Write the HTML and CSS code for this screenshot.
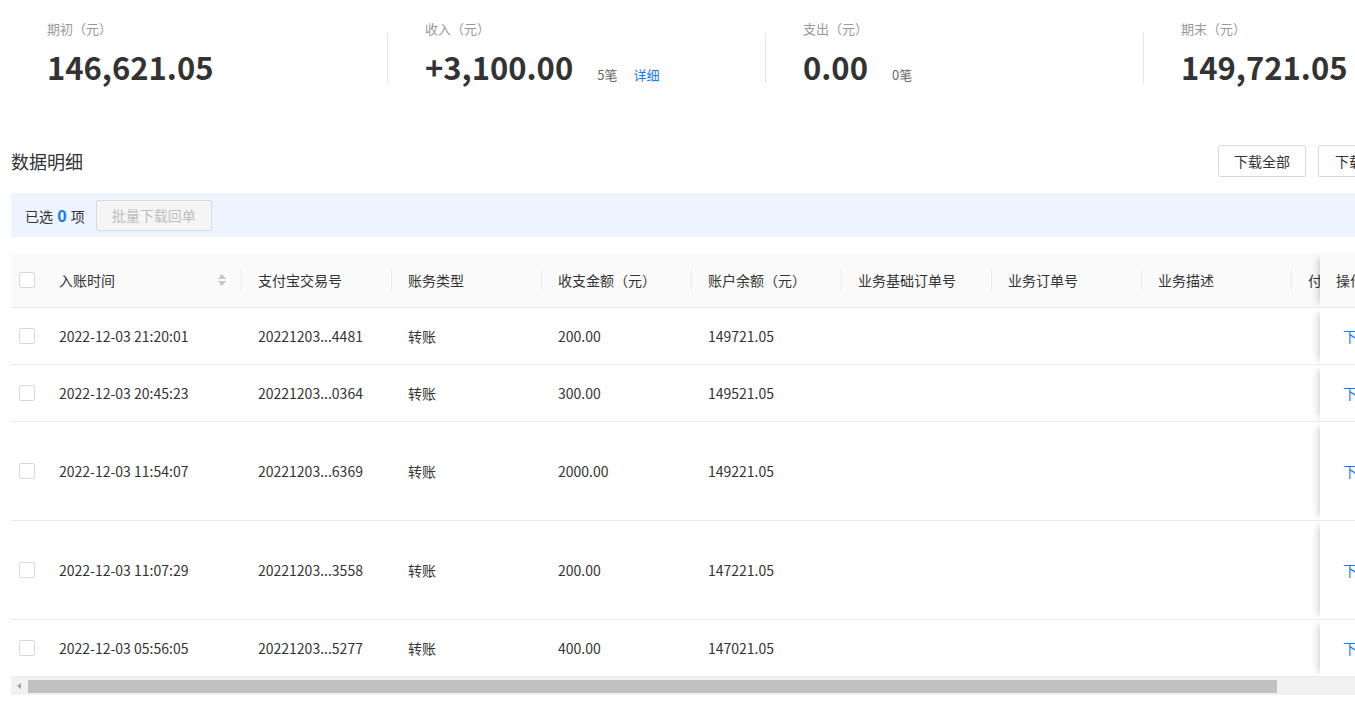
FILE: index.html
```html
<!DOCTYPE html>
<html lang="zh-CN">
<head>
<meta charset="utf-8">
<title>数据明细</title>
<link rel="stylesheet" href="styles.css">
</head>
<body>
<div class="page">
  <section class="summary">
    <div class="stat stat-first">
      <div class="stat-label">期初（元）</div>
      <div class="stat-value">146,621.05</div>
    </div>
    <div class="stat-divider"></div>
    <div class="stat">
      <div class="stat-label">收入（元）</div>
      <div class="stat-value">+3,100.00<span class="stat-count">5笔</span><a class="stat-link">详细</a></div>
    </div>
    <div class="stat-divider"></div>
    <div class="stat">
      <div class="stat-label">支出（元）</div>
      <div class="stat-value">0.00<span class="stat-count">0笔</span></div>
    </div>
    <div class="stat-divider"></div>
    <div class="stat">
      <div class="stat-label">期末（元）</div>
      <div class="stat-value">149,721.05</div>
    </div>
  </section>

  <div class="section-head">
    <h2 class="section-title">数据明细</h2>
    <div class="section-actions">
      <button class="btn">下载全部</button>
      <button class="btn btn-wide">下载回单</button>
    </div>
  </div>

  <div class="select-bar">
    <span class="select-text">已选 <b class="select-num">0</b> 项</span>
    <button class="btn-disabled">批量下载回单</button>
  </div>

  <div class="table-wrap">
    <table class="grid">
      <colgroup>
        <col class="c-check"><col class="c-time"><col class="c-std"><col class="c-std"><col class="c-std"><col class="c-std"><col class="c-std"><col class="c-std"><col class="c-std"><col class="c-clip"><col class="c-op">
      </colgroup>
      <thead>
        <tr>
          <th class="cell-check"><span class="checkbox"></span></th>
          <th class="sep"><div class="th-sort"><span>入账时间</span><span class="sorter"><i class="tri-up"></i><i class="tri-down"></i></span></div></th>
          <th class="sep">支付宝交易号</th>
          <th class="sep">账务类型</th>
          <th class="sep">收支金额（元）</th>
          <th class="sep">账户余额（元）</th>
          <th class="sep">业务基础订单号</th>
          <th class="sep">业务订单号</th>
          <th class="sep">业务描述</th>
          <th class="clip">付款方信息</th>
          <th class="op">操作</th>
        </tr>
      </thead>
      <tbody>
        <tr class="row">
          <td class="cell-check"><span class="checkbox"></span></td>
          <td>2022-12-03 21:20:01</td><td>20221203...4481</td><td>转账</td><td>200.00</td><td>149721.05</td><td></td><td></td><td></td><td class="clip"></td>
          <td class="op"><a class="op-link">下载回单</a></td>
        </tr>
        <tr class="row">
          <td class="cell-check"><span class="checkbox"></span></td>
          <td>2022-12-03 20:45:23</td><td>20221203...0364</td><td>转账</td><td>300.00</td><td>149521.05</td><td></td><td></td><td></td><td class="clip"></td>
          <td class="op"><a class="op-link">下载回单</a></td>
        </tr>
        <tr class="row row-tall">
          <td class="cell-check"><span class="checkbox"></span></td>
          <td>2022-12-03 11:54:07</td><td>20221203...6369</td><td>转账</td><td>2000.00</td><td>149221.05</td><td></td><td></td><td></td><td class="clip"></td>
          <td class="op"><a class="op-link">下载回单</a></td>
        </tr>
        <tr class="row row-tall">
          <td class="cell-check"><span class="checkbox"></span></td>
          <td>2022-12-03 11:07:29</td><td>20221203...3558</td><td>转账</td><td>200.00</td><td>147221.05</td><td></td><td></td><td></td><td class="clip"></td>
          <td class="op"><a class="op-link">下载回单</a></td>
        </tr>
        <tr class="row">
          <td class="cell-check"><span class="checkbox"></span></td>
          <td>2022-12-03 05:56:05</td><td>20221203...5277</td><td>转账</td><td>400.00</td><td>147021.05</td><td></td><td></td><td></td><td class="clip"></td>
          <td class="op"><a class="op-link">下载回单</a></td>
        </tr>
      </tbody>
    </table>
    <div class="hscroll">
      <i class="hscroll-arrow"></i>
      <div class="hscroll-thumb"></div>
    </div>
  </div>
</div>
</body>
</html>
```

FILE: styles.css
```css
* { box-sizing: border-box; }

html, body {
  margin: 0;
  padding: 0;
  background: #fff;
  overflow: hidden;
}

body {
  font-family: "Noto Sans CJK SC", "Microsoft YaHei", "Liberation Sans", sans-serif;
  font-size: 14px;
  color: #333;
  text-spacing-trim: space-all;
}

.page {
  width: 1530px;
  padding-left: 11px;
}

/* ---------- summary ---------- */
.summary {
  display: flex;
  align-items: flex-start;
  padding-top: 18px;
}

.stat {
  flex: 0 0 377px;
  padding-left: 37px;
}

.stat-first {
  flex: 0 0 376px;
  padding-left: 36px;
}

.stat-divider {
  flex: 0 0 1px;
  height: 50px;
  margin-top: 15px;
  background: #e4e4e4;
}

.stat-label {
  font-size: 13px;
  line-height: 22px;
  color: #999;
}

.stat-value {
  margin-top: 7px;
  font-size: 31px;
  line-height: 40px;
  height: 40px;
  font-weight: 700;
  color: #333;
  white-space: nowrap;
}

.stat-count {
  margin-left: 24px;
  font-size: 13px;
  line-height: 1;
  font-weight: 400;
  color: #666;
}

.stat-link {
  margin-left: 16px;
  font-size: 13px;
  line-height: 1;
  font-weight: 400;
  color: #1677ff;
}

/* ---------- section head ---------- */
.section-head {
  display: flex;
  justify-content: space-between;
  align-items: center;
  width: 1430px;
  margin-top: 58px;
  height: 32px;
}

.section-title {
  margin: 0;
  font-size: 18px;
  font-weight: 400;
  color: #333;
}

.section-actions {
  display: flex;
  gap: 12px;
}

.btn {
  width: 88px;
  height: 32px;
  border: 1px solid #d9d9d9;
  border-radius: 2px;
  background: #fff;
  font-family: inherit;
  font-size: 14px;
  color: #333;
  padding: 0;
}

.btn-wide {
  width: 123px;
  text-align: left;
  padding-left: 16px;
}

/* ---------- selection bar ---------- */
.select-bar {
  display: flex;
  align-items: center;
  width: 1430px;
  margin-top: 16px;
  height: 44px;
  padding-left: 14px;
  background: #edf4ff;
}

.select-text {
  font-size: 14px;
  color: #333;
}

.select-num {
  color: #1677ff;
  font-size: 16px;
  font-weight: 700;
  margin: 0 1px;
}

.btn-disabled {
  margin-left: 11px;
  width: 116px;
  height: 31px;
  border: 1px solid #d9d9d9;
  border-radius: 2px;
  background: #f5f5f5;
  color: #bfbfbf;
  font-family: inherit;
  font-size: 14px;
  padding: 0;
}

/* ---------- table ---------- */
.table-wrap {
  margin-top: 16px;
  width: 1430px;
}

.grid {
  width: 1430px;
  table-layout: fixed;
  border-collapse: separate;
  border-spacing: 0;
}

.c-check { width: 32px; }
.c-time { width: 199px; }
.c-std { width: 150px; }
.c-clip { width: 28px; }
.c-op { width: 121px; }

.grid th,
.grid td {
  padding: 0 0 0 16px;
  text-align: left;
  vertical-align: middle;
  white-space: nowrap;
  overflow: hidden;
  border-bottom: 1px solid #ececec;
  font-size: 14px;
}

.grid th {
  height: 55px;
  background: #fafafa;
  font-weight: 400;
  color: #333;
  position: relative;
}

.grid td {
  height: 57px;
  color: #333;
  background: #fff;
}

.grid .row-tall td { height: 99px; }

.grid th.sep::after {
  content: "";
  position: absolute;
  right: 0;
  top: 16px;
  width: 1px;
  height: 22px;
  background: #ebebeb;
}

.grid .cell-check {
  padding-left: 8px;
}

.checkbox {
  display: block;
  width: 16px;
  height: 16px;
  border: 1px solid #d9d9d9;
  border-radius: 2px;
  background: #fff;
}

.th-sort {
  display: flex;
  align-items: center;
  justify-content: space-between;
  padding-right: 16px;
}

.sorter {
  display: flex;
  flex-direction: column;
  gap: 2px;
}

.tri-up,
.tri-down {
  display: block;
  width: 0;
  height: 0;
  border-left: 4px solid transparent;
  border-right: 4px solid transparent;
}

.tri-up { border-bottom: 5px solid #c4c4c4; }
.tri-down { border-top: 5px solid #c4c4c4; }

.grid .clip {
  text-overflow: clip;
}

.grid .op {
  position: relative;
  box-shadow: -7px 0 7px -5px rgba(0, 0, 0, 0.18);
}

.op-link {
  margin-left: 7px;
  color: #1677ff;
}

/* ---------- horizontal scrollbar ---------- */
.hscroll {
  display: flex;
  align-items: center;
  height: 18px;
  background: #f1f1f1;
}

.hscroll-arrow {
  display: block;
  width: 0;
  height: 0;
  margin-left: 6px;
  border-top: 3px solid transparent;
  border-bottom: 3px solid transparent;
  border-right: 4px solid #a3a3a3;
}

.hscroll-thumb {
  width: 1249px;
  height: 13px;
  margin-left: 7px;
  background: #c1c1c1;
}
```
